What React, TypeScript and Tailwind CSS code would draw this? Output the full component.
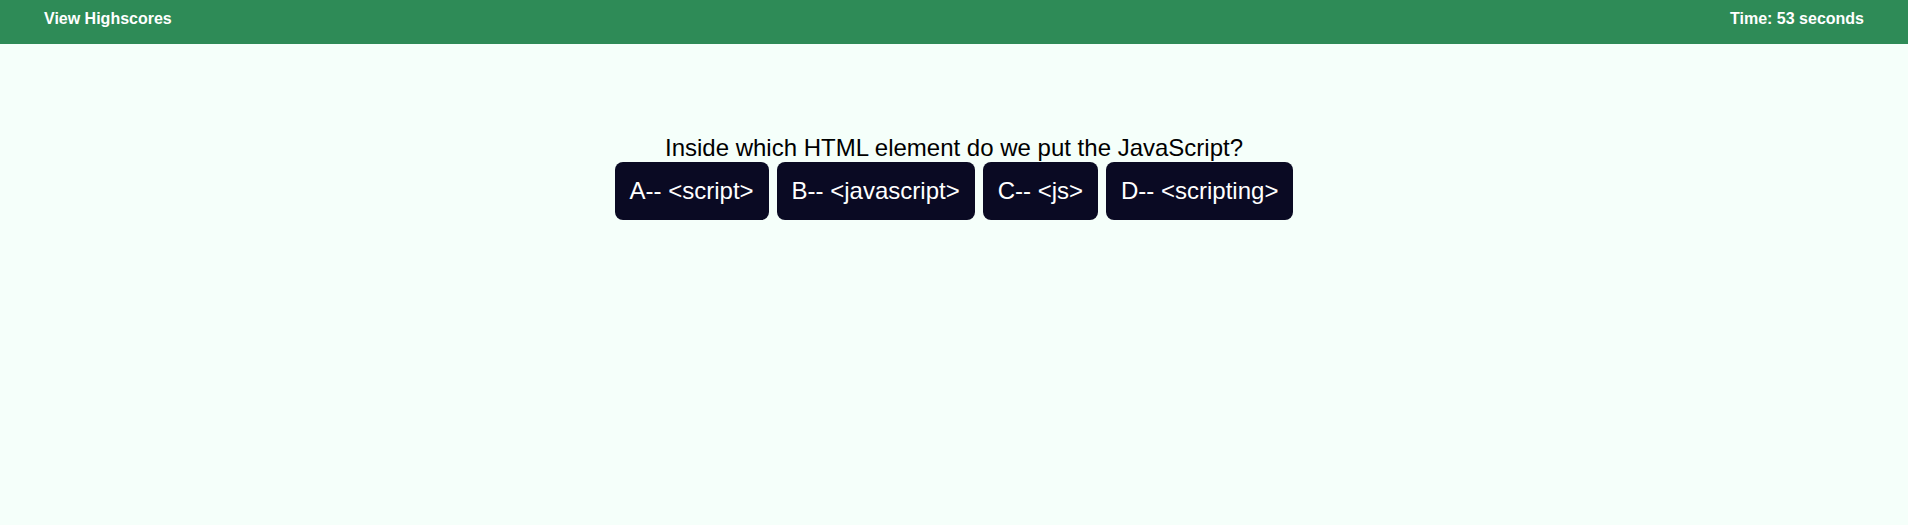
export default function App() {
  const answers = ["A-- <script>", "B-- <javascript>", "C-- <js>", "D-- <scripting>"];

  return (
    <div className="min-h-screen w-full bg-[#f5fffa] font-['Liberation_Sans',Arial,sans-serif]">
      <header className="h-[44px] bg-[#2e8b57] px-[44px] pt-[10px] flex justify-between items-start text-white font-bold text-[16px] leading-[18px]">
        <a href="#" className="text-white">View Highscores</a>
        <span>Time: 53 seconds</span>
      </header>

      <main className="pt-[90px] flex flex-col items-center">
        <h2 className="text-[24px] leading-[28px] text-black font-normal">
          Inside which HTML element do we put the JavaScript?
        </h2>
        <div className="flex gap-2">
          {answers.map((a) => (
            <button
              key={a}
              className="bg-[#0a0a23] text-white text-[24px] leading-[28px] px-[15px] py-[15px] rounded-lg"
            >
              {a}
            </button>
          ))}
        </div>
      </main>
    </div>
  );
}
